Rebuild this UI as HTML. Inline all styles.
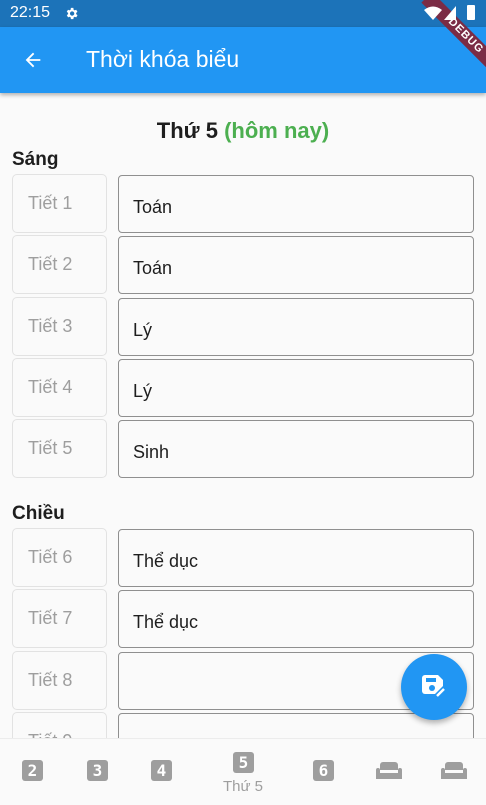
<!DOCTYPE html>
<html><head><meta charset="utf-8"><style>
*{margin:0;padding:0;box-sizing:border-box}
body{width:486px;height:805px;overflow:hidden;background:#fafafa;font-family:"Liberation Sans","Noto Sans CJK SC",sans-serif;position:relative}
.abs{position:absolute}
.status{left:0;top:0;width:486px;height:27px;background:#1c73b9;color:#fff}
.bar{left:0;top:27px;width:486px;height:66px;background:#2196f3;box-shadow:0 2px 4px rgba(0,0,0,.3)}
.lbox{position:absolute;left:12px;width:95px;height:59px;border:1px solid #e2e2e2;border-radius:5px;color:#9e9e9e;font-size:18px;text-align:left;padding-left:15px;line-height:57px}
.rbox{position:absolute;left:118px;width:356px;height:58px;border:1px solid #8f8f8f;border-radius:4px;color:#1e1e1e;font-size:18px;padding-left:14px;line-height:62px}
.sec{position:absolute;left:12px;font-weight:bold;font-size:19px;color:#1e1e1e}
.nav{left:0;top:738px;width:486px;height:67px;background:#fafafa;border-top:1px solid #ececec}
.ni{position:absolute;width:21px;height:21px;background:#9e9e9e;border-radius:3px;color:#fff;font-weight:bold;font-size:16px;text-align:center;line-height:21px;font-family:"DejaVu Sans Mono",monospace}
</style></head><body>
<div class="abs status">
<div class="abs" style="left:10px;top:4px;font-size:16px">22:15</div>
<svg class="abs" style="left:64px;top:6px" width="15" height="15" viewBox="0 0 24 24"><path fill="#fff" d="M19.4 13a7.5 7.5 0 000-2l2.1-1.6-2-3.5-2.5 1a7 7 0 00-1.7-1L15 3h-4l-.4 2.9a7 7 0 00-1.7 1l-2.5-1-2 3.5L6.6 11a7.5 7.5 0 000 2l-2.1 1.6 2 3.5 2.5-1a7 7 0 001.7 1L11 21h4l.4-2.9a7 7 0 001.7-1l2.5 1 2-3.5zM13 15.5a3.5 3.5 0 110-7 3.5 3.5 0 010 7z"/></svg>
</div>
<div class="abs bar">
<svg class="abs" style="left:22px;top:22px" width="22" height="22" viewBox="0 0 24 24"><path fill="#fff" d="M20 11H7.8l5.6-5.6L12 4l-8 8 8 8 1.4-1.4L7.8 13H20z"/></svg>
<div class="abs" style="left:86px;top:19px;color:#fff;font-size:23px;font-weight:500">Thời khóa biểu</div>
</div>
<div class="abs" style="left:432px;top:-8px;width:110px;height:15px;background:#7b2c45;transform:rotate(45deg);transform-origin:0 0;color:#fff;font-size:11px;font-weight:bold;text-align:center;line-height:15px;letter-spacing:1px">DEBUG</div>
<svg class="abs" style="left:424px;top:6px;z-index:5" width="18" height="14" viewBox="0 0 18 14"><path fill="#fff" d="M0 4Q9-3 18 4L9 14z"/></svg>
<svg class="abs" style="left:444px;top:6px;z-index:5" width="12" height="14" viewBox="0 0 12 14"><path fill="#fff" d="M12 0V14H0z"/></svg>
<div class="abs" style="left:467px;top:5px;width:8px;height:15px;background:#fff;border-radius:1px;z-index:5"></div>

<div class="abs" style="left:0;top:118px;width:486px;text-align:center;font-size:22px;font-weight:bold;color:#1e1e1e">Thứ 5 <span style="color:#4caf50">(hôm nay)</span></div>
<div class="sec" style="top:149px">Sáng</div>
<div class="sec" style="top:503px">Chiều</div>

<div class="lbox" style="top:174px">Tiết 1</div><div class="rbox" style="top:175px">Toán</div>
<div class="lbox" style="top:235px">Tiết 2</div><div class="rbox" style="top:236px">Toán</div>
<div class="lbox" style="top:297px">Tiết 3</div><div class="rbox" style="top:298px">Lý</div>
<div class="lbox" style="top:358px">Tiết 4</div><div class="rbox" style="top:359px">Lý</div>
<div class="lbox" style="top:419px">Tiết 5</div><div class="rbox" style="top:420px">Sinh</div>
<div class="lbox" style="top:528px">Tiết 6</div><div class="rbox" style="top:529px">Thể dục</div>
<div class="lbox" style="top:589px">Tiết 7</div><div class="rbox" style="top:590px">Thể dục</div>
<div class="lbox" style="top:651px">Tiết 8</div><div class="rbox" style="top:652px"></div>
<div class="lbox" style="top:712px">Tiết 9</div><div class="rbox" style="top:713px"></div>

<div class="abs" style="left:401px;top:654px;width:66px;height:66px;border-radius:50%;background:#2196f3;box-shadow:0 3px 6px rgba(0,0,0,.3)">
<svg class="abs" style="left:21px;top:21px" width="26" height="24" viewBox="0 0 26 24"><path fill="#fff" d="M3 0h13l5 5v6l-8 8H3a3 3 0 01-3-3V3a3 3 0 013-3z"/><rect x="4" y="3" width="10" height="4" fill="#2196f3"/><circle cx="10" cy="13" r="3" fill="#2196f3"/><path d="M15 21l7-7" stroke="#fff" stroke-width="2.5"/></svg>
</div>

<div class="abs nav">
<div class="ni" style="left:22px;top:21px">2</div>
<div class="ni" style="left:87px;top:21px">3</div>
<div class="ni" style="left:151px;top:21px">4</div>
<div class="ni" style="left:233px;top:13px">5</div>
<div class="abs" style="left:213px;top:39px;width:60px;text-align:center;font-size:15px;color:#9e9e9e">Thứ 5</div>
<div class="ni" style="left:313px;top:21px">6</div>
<svg class="abs" style="left:376px;top:23px" width="26" height="18" viewBox="0 0 26 18"><path fill="#9e9e9e" d="M4 3a3 3 0 013-3h12a3 3 0 013 3v5H4zM0 8a2 2 0 014 0v3h18V8a2 2 0 014 0v9H0z"/></svg>
<svg class="abs" style="left:441px;top:23px" width="26" height="18" viewBox="0 0 26 18"><path fill="#9e9e9e" d="M4 3a3 3 0 013-3h12a3 3 0 013 3v5H4zM0 8a2 2 0 014 0v3h18V8a2 2 0 014 0v9H0z"/></svg>
</div>
</body></html>
